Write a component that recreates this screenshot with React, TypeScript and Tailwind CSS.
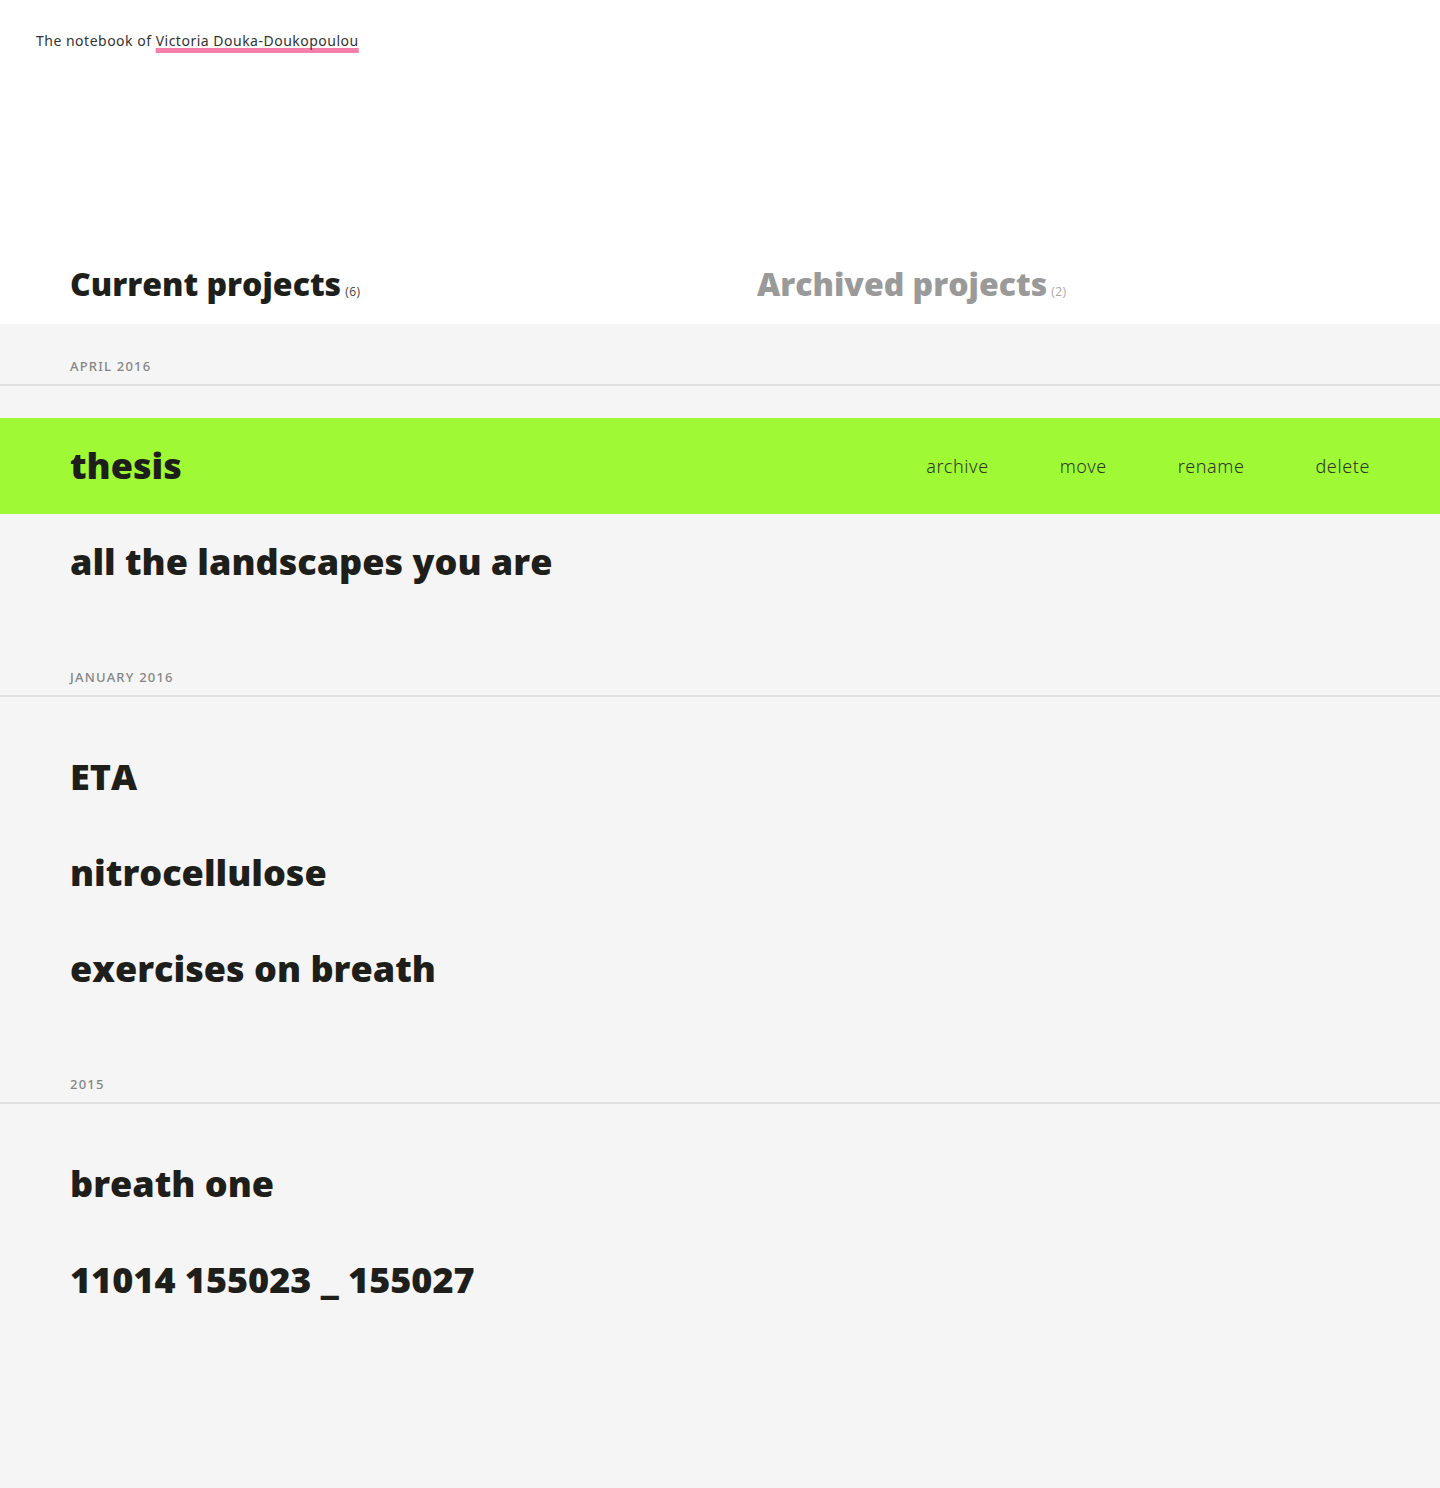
import React from "react";

type Section = { label: string; items: string[] };

const sections: Section[] = [
  { label: "April 2016", items: ["thesis", "all the landscapes you are"] },
  { label: "January 2016", items: ["ETA", "nitrocellulose", "exercises on breath"] },
  { label: "2015", items: ["breath one", "11014 155023 _ 155027"] },
];

export default function App() {
  return (
    <div className="min-h-[1488px] bg-[#f5f5f5] font-['Open_Sans',sans-serif] text-[#1e1e1a]">
      <div className="bg-white">
        <header className="px-[36px] pt-[31px] pb-0">
          <p className="text-[14px] leading-[20px] tracking-[0.5px] text-[#333] font-['Noto_Sans',sans-serif]">
            The notebook of{" "}
            <span className="underline decoration-[#f47fab] decoration-[5px] underline-offset-[2px] [text-decoration-skip-ink:none]">
              Victoria Douka-Doukopoulou
            </span>
          </p>
        </header>
        <nav className="flex px-[70px] pt-[213px] pb-[20px]">
          <div className="w-[687px] flex items-baseline">
            <h2 className="text-[32px] leading-[40px] font-extrabold text-[#1e1e1a]">Current projects</h2>
            <span className="ml-[4px] text-[12px] text-[#444] tracking-[0.5px]">(6)</span>
          </div>
          <div className="flex items-baseline">
            <h2 className="text-[32px] leading-[40px] font-extrabold text-[#9a9a9a]">Archived projects</h2>
            <span className="ml-[4px] text-[12px] text-[#aaa] tracking-[0.5px]">(2)</span>
          </div>
        </nav>
      </div>
      <main>
        {sections.map((s) => (
          <section key={s.label} className="pt-[32px] pb-[25px]">
            <div className="border-b-2 border-[#e0e0e0] px-[70px] pb-[8px]">
              <p className="text-[13px] leading-[20px] uppercase tracking-[1.2px] text-[#858585] font-medium font-['Noto_Sans',sans-serif]">{s.label}</p>
            </div>
            <ul className="pt-[32px]">
              {s.items.map((it) => {
                const active = it === "thesis";
                return (
                  <li
                    key={it}
                    className={
                      active
                        ? "h-[96px] flex items-center justify-between bg-[#a0f935] px-[70px]"
                        : "h-[96px] flex items-center px-[70px]"
                    }
                  >
                    <span className="text-[36px] font-extrabold text-[#1e1e1a]">{it}</span>
                    {active && (
                      <div className="flex gap-[71px] text-[18px] font-light tracking-[0.6px] text-[#2e3526] font-['Noto_Sans',sans-serif]">
                        <span>archive</span>
                        <span>move</span>
                        <span>rename</span>
                        <span>delete</span>
                      </div>
                    )}
                  </li>
                );
              })}
            </ul>
          </section>
        ))}
      </main>
    </div>
  );
}
